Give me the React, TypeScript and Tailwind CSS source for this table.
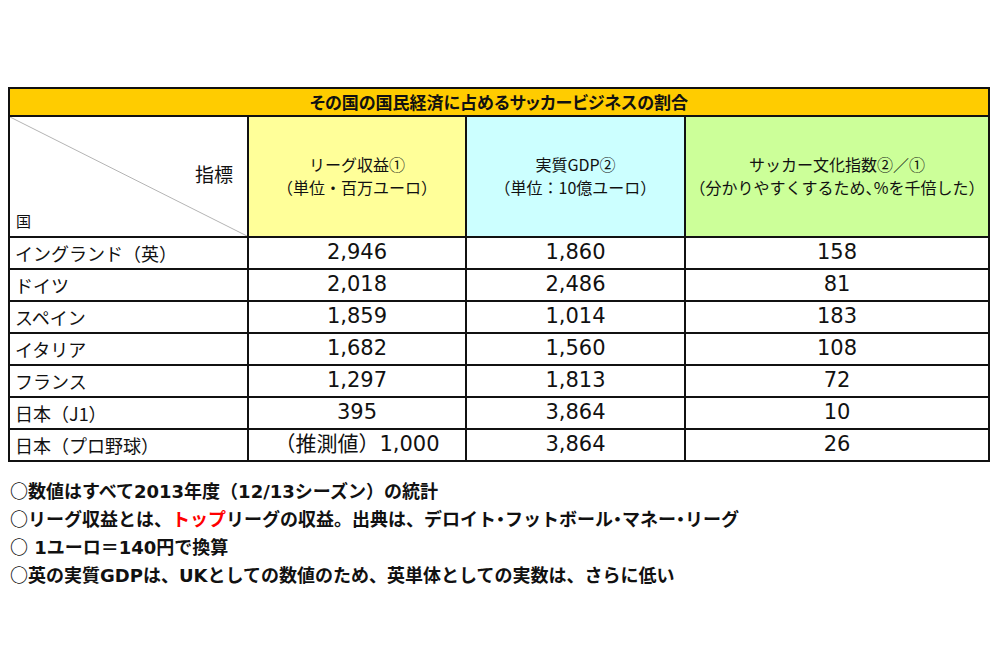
const rows: [string, string, string, string][] = [
  ['イングランド（英）', '2,946', '1,860', '158'],
  ['ドイツ', '2,018', '2,486', '81'],
  ['スペイン', '1,859', '1,014', '183'],
  ['イタリア', '1,682', '1,560', '108'],
  ['フランス', '1,297', '1,813', '72'],
  ['日本（J1）', '395', '3,864', '10'],
  ['日本（プロ野球）', '（推測値）1,000', '3,864', '26'],
];

const jp = "font-['Noto_Sans_CJK_JP',sans-serif]";
const num = "font-['DejaVu_Sans','Noto_Sans_CJK_JP',sans-serif]";

// narrow punctuation (proportional alternates)
function P({ c }: { c: string }) {
  return <span className="[font-feature-settings:'palt']">{c}</span>;
}

// bullet circle in the CJK face
function O() {
  return <span className={jp}>○</span>;
}

function HeaderCell({ bg, top, bottom }: { bg: string; top: React.ReactNode; bottom: React.ReactNode }) {
  return (
    <div className={`${bg} flex flex-col items-center justify-center pb-[2px] text-[16px] leading-[23px] text-[#111] ${jp}`}>
      <span>{top}</span>
      <span>{bottom}</span>
    </div>
  );
}

export default function App() {
  return (
    <div className="h-[665px] w-[1000px] bg-white pt-[87px] pl-[8px]">
      <div className="grid w-[982px] grid-cols-[237px_216px_217px_302px] grid-rows-[26px_119px_repeat(7,30px)] gap-[2px] bg-[#111] p-[2px]">
        <div className={`col-span-4 flex items-center justify-center bg-[#ffcc00] text-[17px] font-bold text-[#111] ${jp} [font-feature-settings:'palt']`}>
          その国の国民経済に占めるサッカービジネスの割合
        </div>

        <div className={`relative bg-white ${jp} text-[#111]`}>
          <svg className="absolute inset-0 h-full w-full" viewBox="0 0 100 100" preserveAspectRatio="none">
            <line x1="0" y1="0" x2="100" y2="100" stroke="#b4b4b4" strokeWidth="1" vectorEffect="non-scaling-stroke" />
          </svg>
          <span className="absolute right-[14px] top-[43px] text-[19px]">指標</span>
          <span className="absolute bottom-[4px] left-[6px] text-[15px]">国</span>
        </div>
        <HeaderCell bg="bg-[#ffff99]" top="リーグ収益①" bottom="（単位・百万ユーロ）" />
        <HeaderCell bg="bg-[#ccffff]" top="実質GDP②" bottom="（単位：10億ユーロ）" />
        <HeaderCell
          bg="bg-[#ccff99]"
          top="サッカー文化指数②／①"
          bottom={<>（分かりやすくするため<P c="、" />%を千倍した）</>}
        />

        {rows.map((r) => (
          <div key={r[0]} className="contents">
            <div className={`flex items-center bg-white pl-[5px] text-[18px] text-[#111] ${jp}`}>{r[0]}</div>
            <div className={`flex items-center justify-center bg-white text-[21px] text-[#111] ${num}`}>{r[1]}</div>
            <div className={`flex items-center justify-center bg-white text-[21px] text-[#111] ${num}`}>{r[2]}</div>
            <div className={`flex items-center justify-center bg-white text-[21px] text-[#111] ${num}`}>{r[3]}</div>
          </div>
        ))}
      </div>

      <div className={`mt-[15px] flex flex-col pl-[2px] text-[18px] font-bold leading-[26px] text-[#111] ${num}`}>
        <p><O />数値はすべて2013年度（12/13シーズン）の統計</p>
        <p>
          <O />リーグ収益とは、<span className="text-[#ff0000]">トップ</span>リーグの収益。出典は、デロイト
          <P c="・" />フットボール<P c="・" />マネー<P c="・" />リーグ
        </p>
        <p><O /> 1ユーロ＝140円で換算</p>
        <p><O />英の実質GDPは、UKとしての数値のため、英単体としての実数は、さらに低い</p>
      </div>
    </div>
  );
}
